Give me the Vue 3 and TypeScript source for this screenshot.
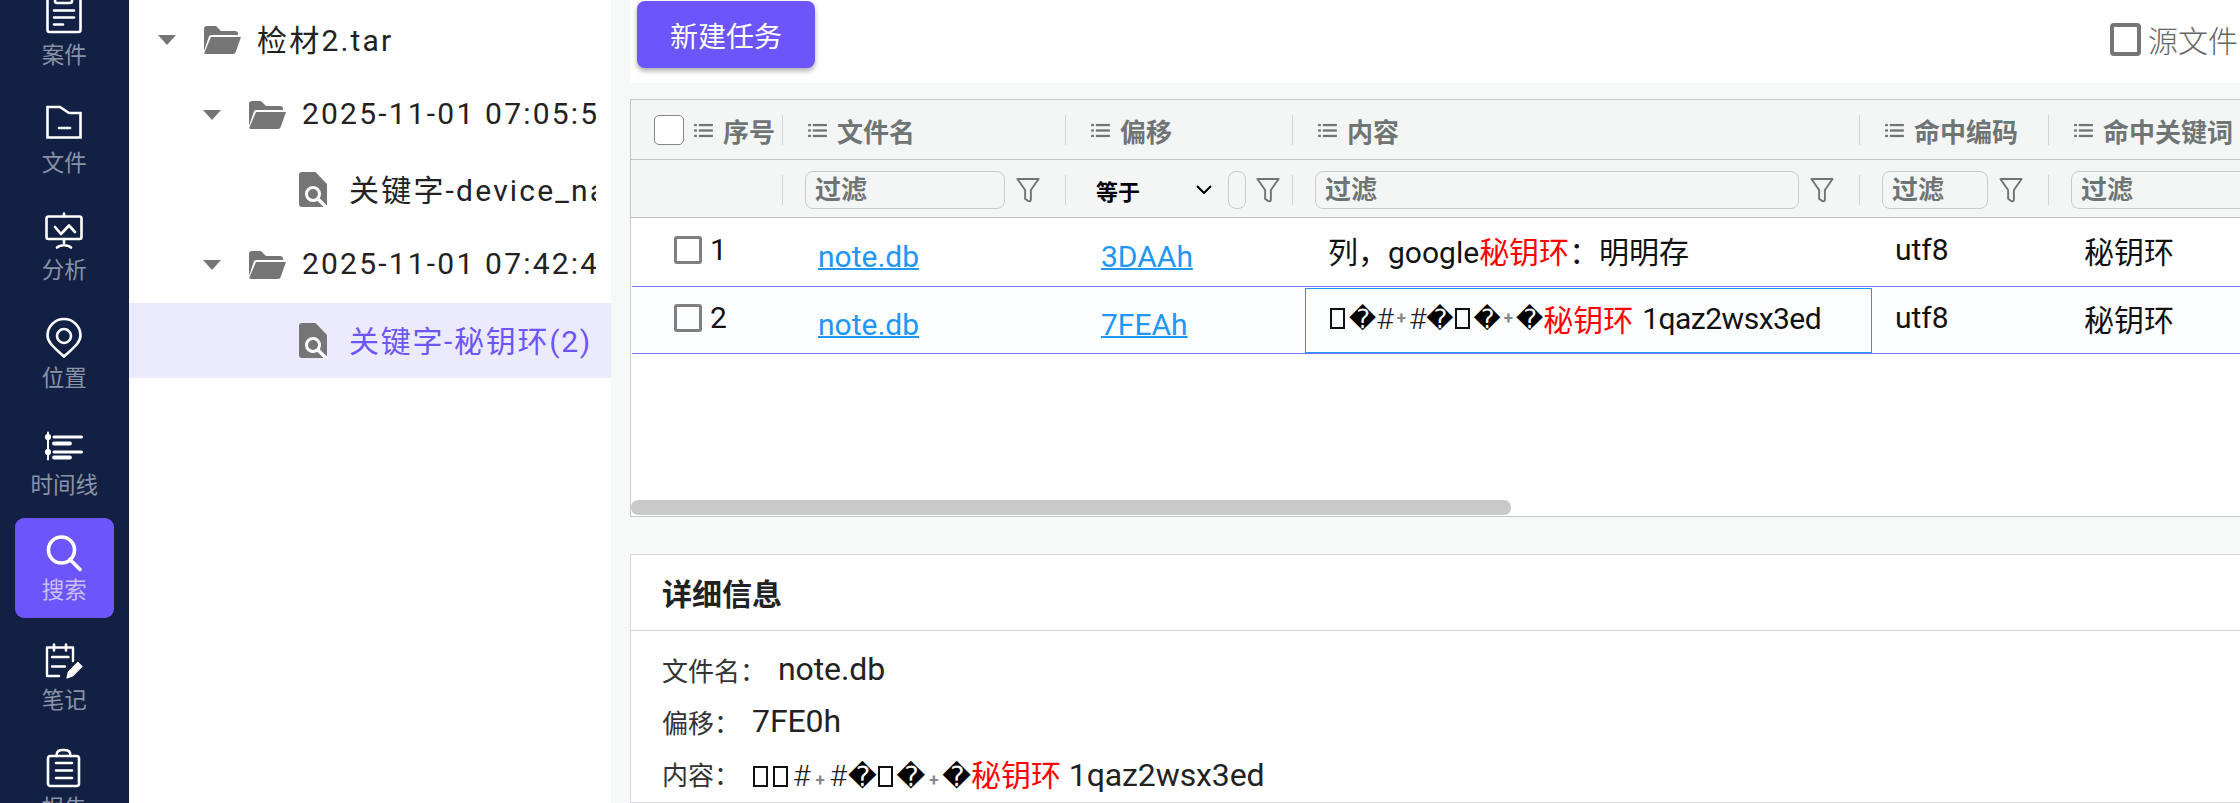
<template>
  <div class="app">
    <nav class="sidebar">
      <div v-for="item in navItems" :key="item.label" class="nav-item" :class="{ active: item.active }">
        <svg class="nav-icon" viewBox="0 0 40 40" fill="none" stroke="#fff" stroke-width="2.6" stroke-linecap="round" stroke-linejoin="round">
          <template v-if="item.icon === 'case'">
            <rect x="3.5" y="-8" width="33" height="45" rx="2" />
            <rect x="11" y="-4" width="17" height="12" rx="2" />
            <path d="M10 15.5h20M10 22.5h20M10 29.5h9" />
          </template>
          <template v-else-if="item.icon === 'file'">
            <path d="M3.5 5H16l9 6h11.5v24.5h-33Z" stroke-linejoin="miter" />
            <path d="M15 26h11" />
          </template>
          <template v-else-if="item.icon === 'chart'">
            <rect x="2.5" y="6.5" width="35" height="22.5" rx="2" />
            <path d="M20 3.5v3M11 17l6 7 8-8.5 6 6.5M20 29v4M13 37.5c3-3 11-3 14 0" />
          </template>
          <template v-else-if="item.icon === 'pin'">
            <path d="M20 39.5C12 32 3.5 26 3.5 18.5a16.5 16.5 0 0 1 33 0C36.5 26 28 32 20 39.5Z" />
            <circle cx="20" cy="19" r="7" />
          </template>
          <template v-else-if="item.icon === 'timeline'">
            <path d="M4 7.5v27" stroke-width="2" />
            <circle cx="4" cy="12" r="1.8" fill="#fff" />
            <circle cx="4" cy="27" r="1.8" fill="#fff" />
            <path d="M10 12h27.5M10 27h27.5" stroke-width="3" />
            <path d="M10 18.5h16M10 32.5h16" stroke-width="3.8" />
          </template>
          <template v-else-if="item.icon === 'search'">
            <circle cx="17.5" cy="18" r="13" stroke-width="3.6" />
            <path d="M26 27.5 36 37.5" stroke-width="3.6" />
          </template>
          <template v-else-if="item.icon === 'note'">
            <path d="M15 36H3V7.5h26V21" stroke-width="2.4" />
            <path d="M10 4.5v6M22 4.5v6" stroke-width="2.6" />
            <path d="M8 17h16.5M8 26.5h13" stroke-width="2.4" />
            <path d="M23 38l1.4-6 9.5-9.5 4 4-9.5 9.5Z" fill="#fff" stroke-width="1.2" />
          </template>
          <template v-else>
            <rect x="4" y="9" width="31" height="30" rx="2.5" />
            <path d="M12.5 9c0-5 2-6 7-6s7 1 7 6" />
            <path d="M12 16h16M12 23.5h16M12 31h16" />
          </template>
        </svg>
        <span class="nav-label">{{ item.label }}</span>
      </div>
    </nav>

    <aside class="tree">
      <div
        v-for="node in treeNodes"
        :key="node.text"
        class="tree-row"
        :class="{ selected: node.selected }"
        :style="{ paddingLeft: 29 + node.level * 45 + 'px' }"
      >
        <template v-if="node.folder">
          <span class="caret"></span>
          <svg class="folder" viewBox="0 0 37 28" fill="#757575">
            <path d="M0 25V3a3 3 0 0 1 3-3h9l5 5h14a3 3 0 0 1 3 3v1H7.5a3 3 0 0 0-2.8 2Z" />
            <path d="M7 11h30l-5.3 15a3 3 0 0 1-2.7 2H2a2 2 0 0 1-1.8-1Z" />
          </svg>
        </template>
        <svg v-else class="file-search" viewBox="0 0 28 35">
          <path d="M3 0h13.5L28 12v20a3 3 0 0 1-3 3H3a3 3 0 0 1-3-3V3a3 3 0 0 1 3-3Z" fill="#757575" />
          <circle cx="14" cy="22" r="6.5" fill="none" stroke="#fff" stroke-width="3" />
          <path d="M19 27l8 8" stroke="#fff" stroke-width="3.4" />
        </svg>
        <span class="tree-text">{{ node.text }}</span>
      </div>
    </aside>

    <main class="main">
      <div class="toolbar">
        <button class="primary-btn">新建任务</button>
        <label class="source-check"><span class="source-box"></span>源文件</label>
      </div>

      <section class="grid">
        <div class="grid-head">
          <div v-for="(col, i) in columns" :key="col" class="head-cell" :class="{ first: i === 0 }">
            <span v-if="i === 0" class="head-check"></span>
            <svg class="list-icon" viewBox="0 0 20 16" fill="#6f7474">
              <rect x="0" y="1" width="3" height="2.4" />
              <rect x="0" y="6.8" width="3" height="2.4" />
              <rect x="0" y="12.6" width="3" height="2.4" />
              <rect x="5" y="1" width="15" height="2.4" />
              <rect x="5" y="6.8" width="15" height="2.4" />
              <rect x="5" y="12.6" width="15" height="2.4" />
            </svg>
            <span class="head-text">{{ col }}</span>
          </div>
        </div>

        <div class="grid-head filter-row">
          <div v-for="(col, i) in columns" :key="col" class="filter-cell" :class="{ first: i === 0, narrow: i === 2 }">
            <template v-if="i === 2">
              <span class="filter-select">等于
                <svg viewBox="0 0 16 9" fill="none" stroke="#000" stroke-width="2"><path d="M1 1l7 7 7-7" /></svg>
              </span>
              <span class="filter-input tiny"></span>
              <svg class="funnel" viewBox="0 0 25 26" fill="none" stroke="#6f7474" stroke-width="2" stroke-linejoin="round"><path d="M1.5 1.5h22L15.5 13v10.5c0 1.5-2.5 1.5-3.5.5l-2.5-2V13Z" /></svg>
            </template>
            <template v-else-if="i > 0">
              <span class="filter-input">过滤</span>
              <svg v-if="i < 5" class="funnel" viewBox="0 0 25 26" fill="none" stroke="#6f7474" stroke-width="2" stroke-linejoin="round"><path d="M1.5 1.5h22L15.5 13v10.5c0 1.5-2.5 1.5-3.5.5l-2.5-2V13Z" /></svg>
            </template>
          </div>
        </div>

        <div class="grid-body">
          <div v-for="(row, r) in rows" :key="row.no" class="body-row" :class="{ striped: r === 1 }">
            <div class="cell no-cell">
              <span class="row-check"></span>
              <span>{{ row.no }}</span>
            </div>
            <div class="cell link-cell"><a>note.db</a></div>
            <div class="cell link-cell"><a>{{ row.offset }}</a></div>
            <div v-if="r === 0" class="cell content-cell">列，google<em>秘钥环</em>：明明存</div>
            <div v-else class="cell content-cell focused">
              <span class="tofu"></span><span class="rep">�</span><span class="hash">#</span><span class="plus">+</span><span class="hash">#</span><span class="rep">�</span><span class="tofu"></span><span class="rep">�</span><span class="plus">+</span><span class="rep">�</span><em>秘钥环</em><span class="tail">&nbsp;1qaz2wsx3ed</span>
            </div>
            <div class="cell">utf8</div>
            <div class="cell">秘钥环</div>
          </div>
        </div>

        <div class="scroll-track"><div class="scroll-thumb"></div></div>
      </section>

      <section class="detail">
        <h3 class="detail-title">详细信息</h3>
        <div class="detail-body">
          <div class="detail-row"><span class="detail-label">文件名：</span><span class="detail-value">note.db</span></div>
          <div class="detail-row"><span class="detail-label">偏移：</span><span class="detail-value">7FE0h</span></div>
          <div class="detail-row">
            <span class="detail-label">内容：</span>
            <span class="detail-value">
              <span class="tofu"></span><span class="tofu"></span><span class="hash">#</span><span class="plus">+</span><span class="hash">#</span><span class="rep">�</span><span class="tofu"></span><span class="rep">�</span><span class="plus">+</span><span class="rep">�</span><em>秘钥环</em>&nbsp;1qaz2wsx3ed
            </span>
          </div>
        </div>
      </section>
    </main>
  </div>
</template>

<script setup lang="ts">
interface NavItem {
  label: string
  icon: string
  active?: boolean
}

interface TreeNode {
  text: string
  level: number
  folder: boolean
  selected?: boolean
}

const navItems: NavItem[] = [
  { label: '案件', icon: 'case' },
  { label: '文件', icon: 'file' },
  { label: '分析', icon: 'chart' },
  { label: '位置', icon: 'pin' },
  { label: '时间线', icon: 'timeline' },
  { label: '搜索', icon: 'search', active: true },
  { label: '笔记', icon: 'note' },
  { label: '报告', icon: 'report' }
]

const treeNodes: TreeNode[] = [
  { text: '检材2.tar', level: 0, folder: true },
  { text: '2025-11-01 07:05:52', level: 1, folder: true },
  { text: '关键字-device_name(1)', level: 2, folder: false },
  { text: '2025-11-01 07:42:48', level: 1, folder: true },
  { text: '关键字-秘钥环(2)', level: 2, folder: false, selected: true }
]

const columns = ['序号', '文件名', '偏移', '内容', '命中编码', '命中关键词']

const rows = [
  { no: 1, offset: '3DAAh' },
  { no: 2, offset: '7FEAh' }
]
</script>

<style>
html,
body {
  margin: 0;
  background: #f7f8f8;
}
</style>

<style scoped>
.app {
  display: flex;
  width: 2240px;
  height: 803px;
  overflow: hidden;
  font-family: Roboto, "Noto Sans CJK SC", "DejaVu Sans", sans-serif;
  color: #111;
}

.sidebar {
  flex: 0 0 129px;
  display: flex;
  flex-direction: column;
  gap: 7.5px;
  margin-top: -20px;
  background: #122043;
  box-sizing: border-box;
  padding: 0 15px 0 14.5px;
}

.nav-item {
  flex: 0 0 100px;
  display: flex;
  flex-direction: column;
  align-items: center;
  box-sizing: border-box;
  padding-top: 14.5px;
  border-radius: 9px;
}

.nav-item.active {
  background: #6c56fb;
}

.nav-icon {
  width: 40px;
  height: 40px;
  flex: none;
  overflow: visible;
}

.nav-label {
  margin-top: 5.5px;
  font-size: 22.5px;
  line-height: 30px;
  color: #8a92a6;
  white-space: nowrap;
}

.active .nav-label {
  margin-top: 3px;
  color: #c8c0fc;
}

.tree {
  flex: 0 0 482px;
  min-width: 0;
  overflow: hidden;
  box-sizing: border-box;
  padding-top: 2px;
  background: #fff;
}

.tree-row {
  display: flex;
  align-items: center;
  height: 75.2px;
  box-sizing: border-box;
  padding-right: 15px;
}

.tree-row.selected {
  background: #eceafd;
}

.caret {
  flex: none;
  width: 0;
  height: 0;
  margin-right: 28px;
  border-left: 9.5px solid transparent;
  border-right: 9.5px solid transparent;
  border-top: 10px solid #757575;
}

.folder {
  flex: none;
  width: 37px;
  height: 28px;
  margin-right: 16px;
}

.file-search {
  flex: none;
  width: 28px;
  height: 35px;
  margin-left: 51px;
  margin-right: 22px;
}

.tree-text {
  min-width: 0;
  overflow: hidden;
  white-space: nowrap;
  padding-bottom: 3px;
  font-size: 30px;
  letter-spacing: 2.2px;
  color: #222;
}

.selected .tree-text {
  letter-spacing: 1.7px;
  color: #6c56fb;
}

.main {
  flex: 1;
  min-width: 0;
  display: flex;
  flex-direction: column;
  padding-left: 19px;
  background: #f7f8f8;
}

.toolbar {
  flex: 0 0 83px;
  display: flex;
  align-items: flex-start;
  justify-content: space-between;
  padding-left: 7px;
  background: #fff;
  overflow: hidden;
}

.primary-btn {
  width: 178px;
  height: 67px;
  margin-top: 1px;
  border: 0;
  border-radius: 8px;
  background: #6c56fb;
  color: #fff;
  font-family: inherit;
  font-size: 28px;
  box-shadow: 0 3px 5px rgba(0, 0, 0, 0.32);
}

.source-check {
  display: flex;
  align-items: center;
  gap: 7px;
  width: 130px;
  height: 40px;
  margin-top: 19px;
  font-size: 30px;
  font-weight: 300;
  color: #666;
  white-space: nowrap;
}

.source-box {
  flex: none;
  width: 31px;
  height: 33px;
  box-sizing: border-box;
  border: 4px solid #757575;
  border-radius: 4px;
}

.grid {
  flex: 0 0 418px;
  display: flex;
  flex-direction: column;
  margin-top: 16px;
  overflow: hidden;
  box-sizing: border-box;
  border: 1px solid #c2c6c6;
  border-right: 0;
  background: #fff;
}

.grid-head,
.body-row {
  display: grid;
  grid-template-columns: 152px 283px 227px 567px 189px 250px;
  width: 1668px;
}

.grid-head {
  height: 60px;
  padding-top: 1px;
  border-bottom: 1px solid #c2c6c6;
  background: #f4f6f6;
  box-sizing: border-box;
  align-items: center;
}

.filter-row {
  height: 58px;
  padding-top: 2px;
}

.head-cell {
  display: flex;
  align-items: center;
  height: 30px;
  box-sizing: border-box;
  padding-left: 25px;
  border-right: 1px solid #d3d6d6;
  white-space: nowrap;
}

.head-cell.first {
  padding-left: 23px;
}

.head-cell:last-child,
.filter-cell:last-child {
  border-right: 0;
}

.head-check {
  flex: none;
  width: 30px;
  height: 30px;
  box-sizing: border-box;
  margin-right: 10px;
  border: 1px solid #888;
  border-radius: 5px;
  background: #fff;
}

.list-icon {
  flex: none;
  width: 19px;
  height: 15px;
  margin-right: 10px;
}

.head-text {
  font-size: 26px;
  font-weight: 700;
  color: #6f7474;
}

.filter-cell {
  display: flex;
  align-items: center;
  height: 30px;
  box-sizing: border-box;
  padding: 0 25px 0 22px;
  border-right: 1px solid #d3d6d6;
}

.filter-input {
  flex: 1;
  min-width: 0;
  height: 38px;
  box-sizing: border-box;
  padding-left: 9px;
  border: 1px solid #c8cccc;
  border-radius: 8px;
  font-size: 26px;
  font-weight: 700;
  line-height: 36px;
  color: #6f7474;
}

.filter-input.tiny {
  flex: 0 0 18px;
  padding: 0;
}

.filter-select {
  display: flex;
  align-items: center;
  flex: none;
  width: 162px;
  box-sizing: border-box;
  padding: 0 16px 0 30px;
  justify-content: space-between;
  font-size: 22px;
  font-weight: 700;
  color: #000;
}

.filter-select svg {
  width: 16px;
  height: 9px;
}

.funnel {
  flex: none;
  width: 24px;
  height: 26px;
  margin-left: 11px;
}

.filter-cell.narrow {
  padding: 0 11px 0 0;
}

.filter-cell.narrow .funnel {
  margin-left: 10px;
}

.grid-body {
  flex: 1;
  min-height: 0;
}

.body-row {
  grid-template-columns: 163px 283px 227px 567px 189px 250px;
  height: 69px;
  box-sizing: border-box;
  border-bottom: 1px solid #7870ff;
  margin-left: 1px;
  font-size: 30px;
}

.body-row.striped {
  height: 67px;
  background: #fcfdff;
}

.cell {
  display: flex;
  align-items: center;
  box-sizing: border-box;
  padding-left: 23px;
  padding-bottom: 5px;
  white-space: nowrap;
  color: #111;
}

.no-cell {
  padding-left: 42px;
  padding-bottom: 5px;
}

.row-check {
  flex: none;
  width: 28px;
  height: 28px;
  box-sizing: border-box;
  margin-right: 8px;
  border: 3px solid #7f7f7f;
  border-radius: 3px;
}

.link-cell {
  padding-bottom: 0;
  padding-top: 9px;
}

.link-cell a {
  color: #2196f3;
  text-decoration: underline;
  text-decoration-thickness: 2px;
}

.content-cell.focused {
  margin: 1px 0 0;
  border: 1px solid #2196f3;
}

.tail {
  margin-left: 2px;
  letter-spacing: -0.5px;
}

.cell em,
.detail-value em {
  font-style: normal;
  font-size: 30px;
  letter-spacing: 0;
  color: #f00;
}

.tofu {
  display: inline-block;
  flex: none;
  width: 15px;
  height: 21px;
  margin: 0 4px 0 1px;
  box-sizing: border-box;
  border: 2px solid #111;
  vertical-align: -1px;
}

.rep {
  font-family: "DejaVu Sans", sans-serif;
  font-size: 26.5px;
  color: #000;
}

.hash {
  font-size: 30px;
  font-weight: 300;
  color: #222;
}

.plus {
  margin: 0 3px;
  font-size: 17px;
  font-weight: 700;
  color: #888;
}

.scroll-track {
  flex: none;
  height: 16px;
  padding-top: 0;
}

.scroll-thumb {
  width: 880px;
  height: 15px;
  border-radius: 7px;
  background: #c9c9c9;
}

.detail {
  flex: 1;
  margin-top: 37px;
  box-sizing: border-box;
  border: 1px solid #d5d9de;
  border-right: 0;
  background: #fff;
}

.detail-title {
  height: 76px;
  margin: 0;
  box-sizing: border-box;
  padding-left: 31px;
  border-bottom: 1px solid #d5d9de;
  font-size: 30px;
  font-weight: 700;
  line-height: 80px;
  color: #222;
}

.detail-body {
  padding: 12px 0 0 31px;
}

.detail-row {
  display: flex;
  align-items: center;
  height: 52px;
  white-space: nowrap;
}

.detail-label {
  margin-right: 12px;
  font-size: 26px;
  color: #333;
}

.detail-value {
  font-size: 32px;
  letter-spacing: -0.1px;
  color: #222;
}

.detail-value .rep {
  font-size: 28px;
}

.detail-value .hash {
  margin: 0 1px;
}

.detail-value .plus {
  margin: 0 4px;
}
</style>
